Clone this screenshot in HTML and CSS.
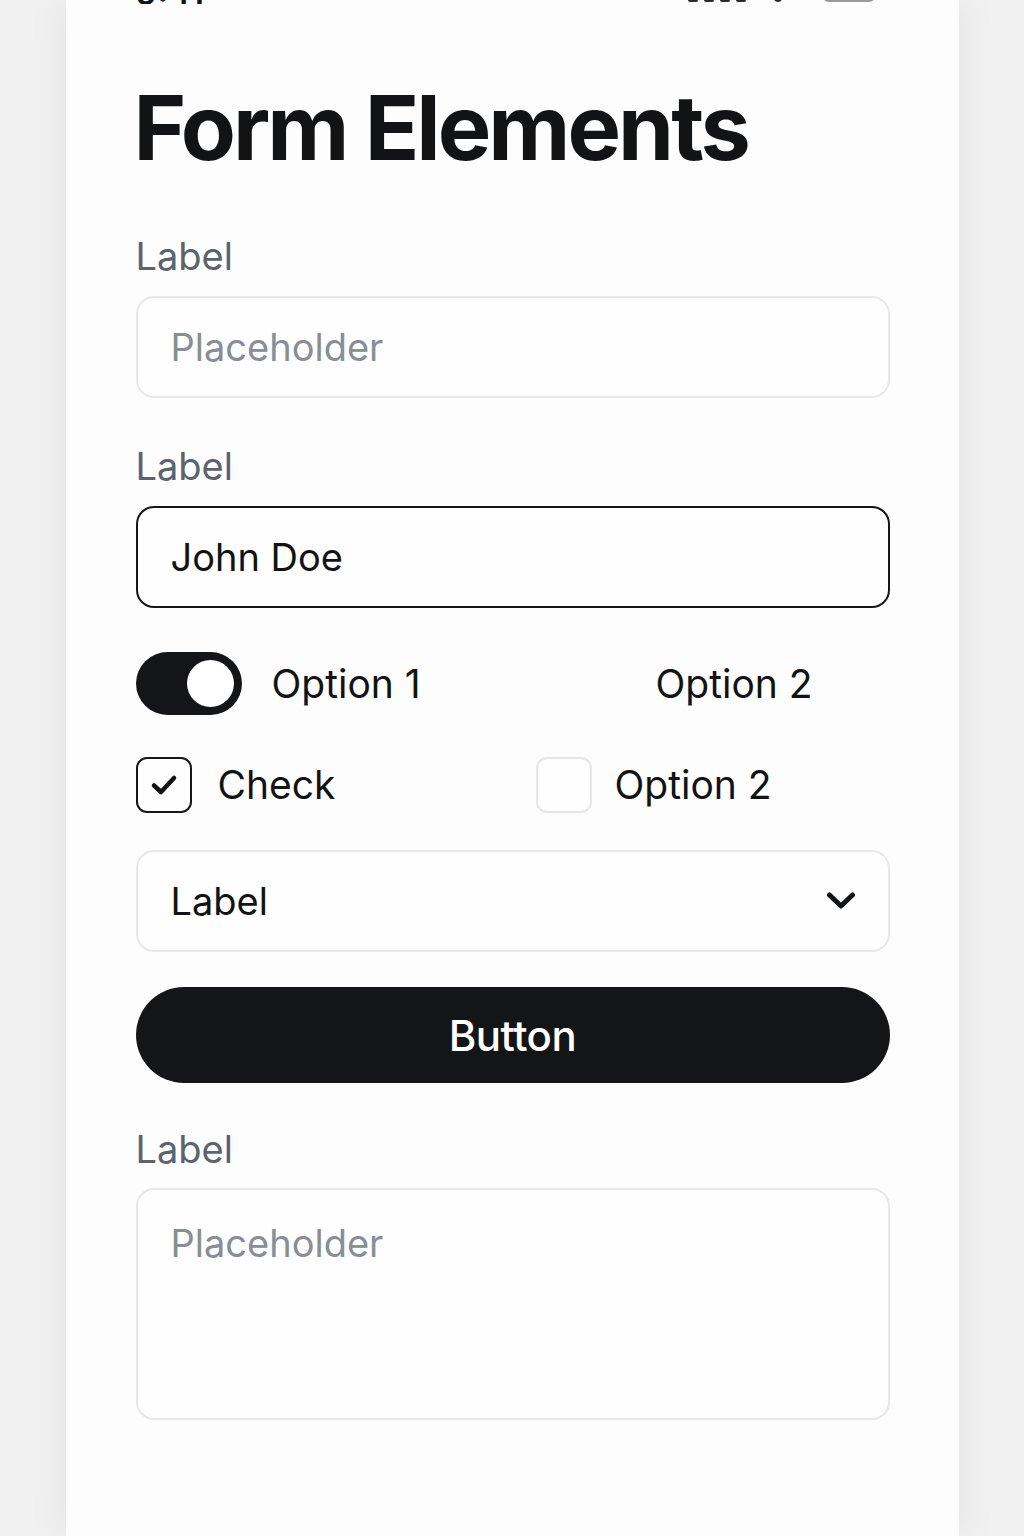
FILE: index.html
```html
<!DOCTYPE html>
<html lang="en">
<head>
<meta charset="utf-8">
<title>Form Elements</title>
<link rel="stylesheet" href="styles.css">
</head>
<body>
<div class="page">
  <main class="card">
    <div class="status">
      <span class="time">9:41</span>
      <span class="status-icons">
        <svg class="signal" width="70" height="30" viewBox="0 0 70 30"><rect x="0" y="20" width="10" height="10" rx="2"/><rect x="16" y="14" width="10" height="16" rx="2"/><rect x="32" y="8" width="10" height="22" rx="2"/><rect x="48" y="2" width="10" height="28" rx="2"/></svg>
        <svg class="wifi" width="20" height="30" viewBox="0 0 20 30"><circle cx="10" cy="26" r="4"/></svg>
        <span class="battery"></span>
      </span>
    </div>

    <h1 class="title">Form Elements</h1>

    <div class="field">
      <div class="label">Label</div>
      <div class="input">
        <span class="placeholder">Placeholder</span>
      </div>
    </div>

    <div class="field field-2">
      <div class="label">Label</div>
      <div class="input input-focus">
        <span class="value">John Doe</span>
      </div>
    </div>

    <div class="choice-row toggle-row">
      <div class="choice">
        <span class="toggle"><span class="knob"></span></span>
        <span class="choice-text">Option 1</span>
      </div>
      <div class="choice choice-plain">
        <span class="choice-text">Option 2</span>
      </div>
    </div>

    <div class="choice-row check-row">
      <div class="choice">
        <span class="checkbox checked">
          <svg width="28" height="26" viewBox="0 0 28 26"><path d="M4 13.5 L11 20 L24 6" fill="none" stroke="#111315" stroke-width="4.5" stroke-linecap="round" stroke-linejoin="round"/></svg>
        </span>
        <span class="choice-text check-text">Check</span>
      </div>
      <div class="choice">
        <span class="checkbox"></span>
        <span class="choice-text check-text-2">Option 2</span>
      </div>
    </div>

    <div class="select">
      <span class="value">Label</span>
      <svg class="chevron" width="30" height="20" viewBox="0 0 30 20"><path d="M3.5 4 L15 15 L26.5 4" fill="none" stroke="#111315" stroke-width="5" stroke-linecap="round" stroke-linejoin="round"/></svg>
    </div>

    <button class="button" type="button">Button</button>

    <div class="field field-3">
      <div class="label">Label</div>
      <div class="textarea">
        <span class="placeholder">Placeholder</span>
      </div>
    </div>
  </main>
</div>
</body>
</html>
```

FILE: styles.css
```css
* {
  box-sizing: border-box;
}

html, body {
  margin: 0;
  padding: 0;
}

body {
  background: #f1f1f1;
  font-family: "Inter", "Noto Sans", "Liberation Sans", sans-serif;
  color: #111315;
}

.page {
  display: flex;
  justify-content: center;
  min-height: 1536px;
  overflow: hidden;
}

.card {
  width: 893px;
  min-height: 1536px;
  background: #fdfdfd;
  box-shadow: 0 0 40px rgba(0, 0, 0, 0.07);
  padding: 0 69px 0 70px;
  display: flex;
  flex-direction: column;
}

.status {
  height: 40px;
  margin-top: -36px;
  display: flex;
  justify-content: space-between;
  align-items: flex-end;
  padding: 0 14px 0 0;
  overflow: hidden;
}

.time {
  font-size: 34px;
  font-weight: 600;
  line-height: 1;
  margin-bottom: -6px;
}

.status-icons {
  display: flex;
  align-items: flex-end;
  gap: 10px;
  margin-bottom: 2px;
}

.status-icons svg {
  fill: #2a2c2f;
}

.battery {
  width: 54px;
  height: 26px;
  border: 3px solid #9a9a9a;
  border-radius: 7px;
  margin-left: 24px;
}

.title {
  margin: 78px 0 0 -2px;
  font-size: 90px;
  line-height: 92px;
  font-weight: 700;
  letter-spacing: -3px;
  color: #111315;
}

.field {
  display: flex;
  flex-direction: column;
  gap: 17px;
  margin-top: 59px;
}

.field-2 {
  margin-top: 45px;
}

.field-3 {
  margin-top: 43px;
  gap: 16px;
}

.label {
  font-size: 38px;
  line-height: 46px;
  color: #5b636c;
  font-weight: 400;
}

.input,
.select,
.textarea {
  height: 102px;
  border: 2px solid #e8e8e8;
  border-radius: 18px;
  background: #fefefe;
  padding: 0 33px;
  display: flex;
  align-items: center;
  font-size: 38px;
}

.input-focus {
  border-color: #141618;
}

.placeholder {
  color: #878e97;
}

.value {
  color: #111315;
}

.choice-row {
  display: grid;
  grid-template-columns: 400px 1fr;
  align-items: center;
}

.toggle-row {
  margin-top: 44px;
}

.check-row {
  margin-top: 42px;
}

.choice {
  display: flex;
  align-items: center;
}

.choice-plain {
  padding-left: 120px;
}

.choice-text {
  font-size: 39px;
  line-height: 46px;
  color: #111315;
}

.toggle {
  width: 106px;
  height: 63px;
  border-radius: 32px;
  background: #131517;
  display: flex;
  align-items: center;
  justify-content: flex-end;
  padding-right: 8px;
  margin-right: 30px;
}

.knob {
  width: 47px;
  height: 47px;
  border-radius: 50%;
  background: #ffffff;
}

.checkbox {
  width: 56px;
  height: 56px;
  border: 2px solid #e6e6e6;
  border-radius: 11px;
  background: #fefefe;
  display: flex;
  align-items: center;
  justify-content: center;
  margin-right: 24px;
}

.checkbox.checked {
  border-color: #141618;
  margin-right: 26px;
}

.checkbox svg {
  display: block;
}

.check-text-2 {
  margin-left: -1px;
}

.select {
  margin-top: 37px;
  justify-content: space-between;
  padding-right: 32px;
}

.chevron {
  display: block;
}

.button {
  margin-top: 35px;
  height: 96px;
  border: none;
  border-radius: 48px;
  background: #131517;
  color: #ffffff;
  font-family: "Inter", "Noto Sans", "Liberation Sans", sans-serif;
  font-size: 42px;
  font-weight: 500;
  letter-spacing: -0.5px;
  padding: 0;
}

.textarea {
  height: 232px;
  align-items: flex-start;
  padding-top: 30px;
}
```
